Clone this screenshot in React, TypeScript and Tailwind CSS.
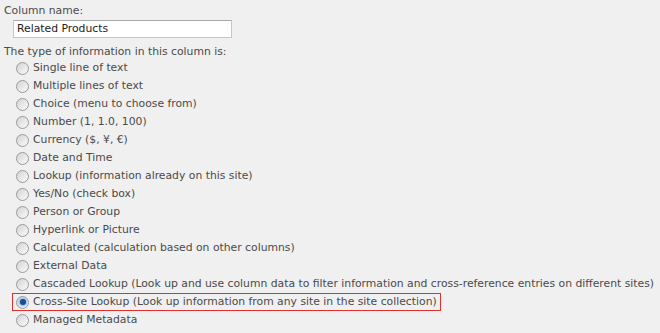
import React from 'react';

const types = [
    'Single line of text',
    'Multiple lines of text',
    'Choice (menu to choose from)',
    'Number (1, 1.0, 100)',
    'Currency ($, ¥, €)',
    'Date and Time',
    'Lookup (information already on this site)',
    'Yes/No (check box)',
    'Person or Group',
    'Hyperlink or Picture',
    'Calculated (calculation based on other columns)',
    'External Data',
    'Cascaded Lookup (Look up and use column data to filter information and cross-reference entries on different sites)',
    'Cross-Site Lookup (Look up information from any site in the site collection)',
    'Managed Metadata',
];

const Radio: React.FC<{ checked?: boolean }> = ({ checked }) => (
    <span className="w-[13px] h-[13px] rounded-full border border-[#9a9a9a] bg-gradient-to-br from-[#d4d4d4] to-[#fafafa] flex items-center justify-center shrink-0">
        {checked && <span className="w-[6px] h-[6px] rounded-full bg-[#1a4f8a] shadow-[0_0_2px_1px_#7ab8f0]" />}
    </span>
);

export default function App() {
    return (
        <div className="w-[660px] h-[333px] bg-[#f0f0f0] text-[#4a4a4a] text-[10.8px] leading-[18px] font-['Verdana','DejaVu_Sans',sans-serif] px-[4px] pt-[2px] overflow-hidden">
            <div>Column name:</div>
            <div className="pl-[9px]">
                <div className="w-[219px] h-[18px] bg-white border border-[#c6c6c6] border-t-[#a9a9a9] pl-[3px] leading-[16px] text-[#222]">
                    Related Products
                </div>
            </div>
            <div className="mt-[5px]">The type of information in this column is:</div>
            <div className="pl-[8px] -mt-[2px]">
                {types.map((t, i) => {
                    const checked = t.startsWith('Cross-Site');
                    return (
                        <div key={i} className="flex">
                            <div className={`flex items-center gap-[4px] px-[3px] h-[18px] border ${checked ? 'border-[#e03030]' : 'border-transparent'}`}>
                                <Radio checked={checked} />
                                <span className="whitespace-nowrap">{t}</span>
                            </div>
                        </div>
                    );
                })}
            </div>
        </div>
    );
}
